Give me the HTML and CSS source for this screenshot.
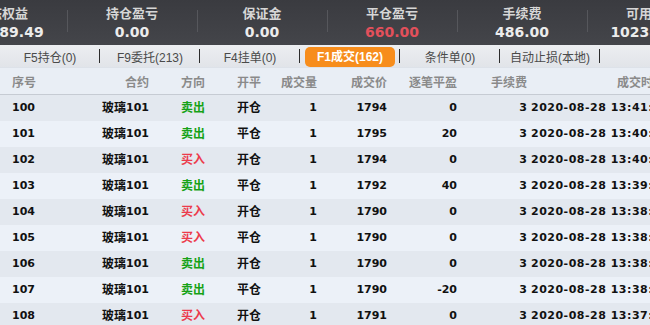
FILE: index.html
```html
<!DOCTYPE html>
<html lang="zh-CN">
<head>
  <meta charset="UTF-8">
  <title>成交</title>
  <link rel="stylesheet" href="styles.css">
</head>
<body>
  <div class="panel">
    <div class="summary">
      <div class="stat"><span class="label">动态权益</span><span class="value">102389.49</span></div>
      <div class="stat"><span class="label">持仓盈亏</span><span class="value">0.00</span></div>
      <div class="stat"><span class="label">保证金</span><span class="value">0.00</span></div>
      <div class="stat"><span class="label">平仓盈亏</span><span class="value red">660.00</span></div>
      <div class="stat"><span class="label">手续费</span><span class="value">486.00</span></div>
      <div class="stat"><span class="label">可用资金</span><span class="value">102389.49</span></div>
    </div>

    <div class="tabs">
      <div class="tab"><span>F5持仓(0)</span></div>
      <div class="tab"><span>F9委托(213)</span></div>
      <div class="tab"><span>F4挂单(0)</span></div>
      <div class="tab active"><span>F1成交(162)</span></div>
      <div class="tab"><span>条件单(0)</span></div>
      <div class="tab"><span>自动止损(本地)</span></div>
    </div>

    <table class="trades">
      <colgroup>
        <col class="c-no"><col class="c-code"><col class="c-dir"><col class="c-oc"><col class="c-vol">
        <col class="c-price"><col class="c-pnl"><col class="c-fee"><col class="c-time">
      </colgroup>
      <thead>
        <tr>
          <th class="left">序号</th><th>合约</th><th>方向</th><th>开平</th><th>成交量</th>
          <th>成交价</th><th>逐笔平盈</th><th>手续费</th><th>成交时间</th>
        </tr>
      </thead>
      <tbody>
        <tr><td class="left">100</td><td><span class="cn">玻璃</span>101</td><td class="sell"><span class="cn">卖出</span></td><td><span class="cn">开仓</span></td><td>1</td><td>1794</td><td>0</td><td>3</td><td class="time">2020-08-28 13:41:52</td></tr>
        <tr><td class="left">101</td><td><span class="cn">玻璃</span>101</td><td class="sell"><span class="cn">卖出</span></td><td><span class="cn">平仓</span></td><td>1</td><td>1795</td><td>20</td><td>3</td><td class="time">2020-08-28 13:40:37</td></tr>
        <tr><td class="left">102</td><td><span class="cn">玻璃</span>101</td><td class="buy"><span class="cn">买入</span></td><td><span class="cn">开仓</span></td><td>1</td><td>1794</td><td>0</td><td>3</td><td class="time">2020-08-28 13:40:05</td></tr>
        <tr><td class="left">103</td><td><span class="cn">玻璃</span>101</td><td class="sell"><span class="cn">卖出</span></td><td><span class="cn">平仓</span></td><td>1</td><td>1792</td><td>40</td><td>3</td><td class="time">2020-08-28 13:39:21</td></tr>
        <tr><td class="left">104</td><td><span class="cn">玻璃</span>101</td><td class="buy"><span class="cn">买入</span></td><td><span class="cn">开仓</span></td><td>1</td><td>1790</td><td>0</td><td>3</td><td class="time">2020-08-28 13:38:56</td></tr>
        <tr><td class="left">105</td><td><span class="cn">玻璃</span>101</td><td class="buy"><span class="cn">买入</span></td><td><span class="cn">平仓</span></td><td>1</td><td>1790</td><td>0</td><td>3</td><td class="time">2020-08-28 13:38:40</td></tr>
        <tr><td class="left">106</td><td><span class="cn">玻璃</span>101</td><td class="sell"><span class="cn">卖出</span></td><td><span class="cn">开仓</span></td><td>1</td><td>1790</td><td>0</td><td>3</td><td class="time">2020-08-28 13:38:22</td></tr>
        <tr><td class="left">107</td><td><span class="cn">玻璃</span>101</td><td class="sell"><span class="cn">卖出</span></td><td><span class="cn">平仓</span></td><td>1</td><td>1790</td><td>-20</td><td>3</td><td class="time">2020-08-28 13:38:03</td></tr>
        <tr><td class="left">108</td><td><span class="cn">玻璃</span>101</td><td class="buy"><span class="cn">买入</span></td><td><span class="cn">开仓</span></td><td>1</td><td>1791</td><td>0</td><td>3</td><td class="time">2020-08-28 13:37:47</td></tr>
      </tbody>
    </table>
  </div>
</body>
</html>
```

FILE: styles.css
```css
html, body {
  margin: 0;
  padding: 0;
  overflow: hidden;
  background: #e9eef5;
}

.panel {
  width: 650px;
  height: 325px;
  overflow: hidden;
  font-family: "DejaVu Sans", "Noto Sans CJK SC", sans-serif;
}

/* top account summary */
.summary {
  display: flex;
  height: 45px;
  margin-left: -63px;
  background: linear-gradient(180deg, #3a3b40 0%, #44454a 100%);
}

.summary .stat {
  flex: 0 0 130px;
  display: flex;
  flex-direction: column;
  align-items: center;
  position: relative;
}

.summary .stat + .stat::before {
  content: "";
  position: absolute;
  left: 0;
  top: 10px;
  height: 22px;
  border-left: 1px solid #56575c;
}

.summary .label {
  margin-top: 4px;
  font-family: "Noto Sans CJK SC", sans-serif;
  font-weight: bold;
  font-size: 13px;
  line-height: 17px;
  color: #d6d6d6;
}

.summary .value {
  margin-top: 2px;
  font-weight: bold;
  font-size: 14px;
  line-height: 18px;
  color: #ececec;
}

.summary .value.red {
  color: #e2505b;
}

/* tab strip */
.tabs {
  display: flex;
  height: 22px;
  background: linear-gradient(180deg, #eceef1 0%, #e1e4e9 100%);
}

.tab {
  flex: 0 0 100px;
  display: flex;
  align-items: center;
  justify-content: center;
  position: relative;
  font-family: "Liberation Sans", "Noto Sans CJK SC", sans-serif;
  font-size: 12px;
  color: #4a4a4a;
}

.tab::after {
  content: "";
  position: absolute;
  right: 0;
  top: 4px;
  height: 14px;
  border-right: 1px solid #2c2c2c;
}

.tab.active span {
  display: block;
  width: 90px;
  height: 20px;
  line-height: 20px;
  margin-top: 1px;
  text-align: center;
  background: #f78d1c;
  border-radius: 5px;
  color: #fff;
  font-weight: bold;
}

/* trade table */
.trades {
  width: 669px;
  table-layout: fixed;
  border-collapse: collapse;
}

.c-no { width: 60px; }
.c-code { width: 93px; }
.c-dir { width: 56px; }
.c-oc { width: 56px; }
.c-vol { width: 56px; }
.c-price { width: 70px; }
.c-pnl { width: 70px; }
.c-fee { width: 70px; }
.c-time { width: 138px; }

.trades th,
.trades td {
  padding: 0 4px;
  text-align: right;
  white-space: nowrap;
  overflow: hidden;
}

.trades th {
  height: 26px;
  background: #e9eef5;
  border-top: 1px solid #dde2e9;
  border-bottom: 1px solid #c6cbd3;
  font-family: "Noto Sans CJK SC", sans-serif;
  font-size: 12px;
  font-weight: bold;
  color: #8a8a8a;
}

.trades .left {
  text-align: left;
  padding-left: 12px;
}

.trades td {
  height: 26px;
  line-height: 26px;
  font-size: 11px;
  font-weight: bold;
  color: #111;
}

.trades td.time {
  text-align: left;
  padding-left: 0;
  letter-spacing: 0.5px;
}

.trades tbody tr:nth-child(odd) {
  background: #e3e8ef;
}

.trades tbody tr:nth-child(even) {
  background: #ecf1f8;
}

/* CJK glyphs fall back to Noto but sit on the DejaVu baseline */
.cn {
  font-family: "DejaVu Sans", "Noto Sans CJK SC", sans-serif;
  font-size: 12px;
  vertical-align: -1px;
}

.trades td.sell {
  color: #16a216;
}

.trades td.buy {
  color: #ec3b4c;
}
```
